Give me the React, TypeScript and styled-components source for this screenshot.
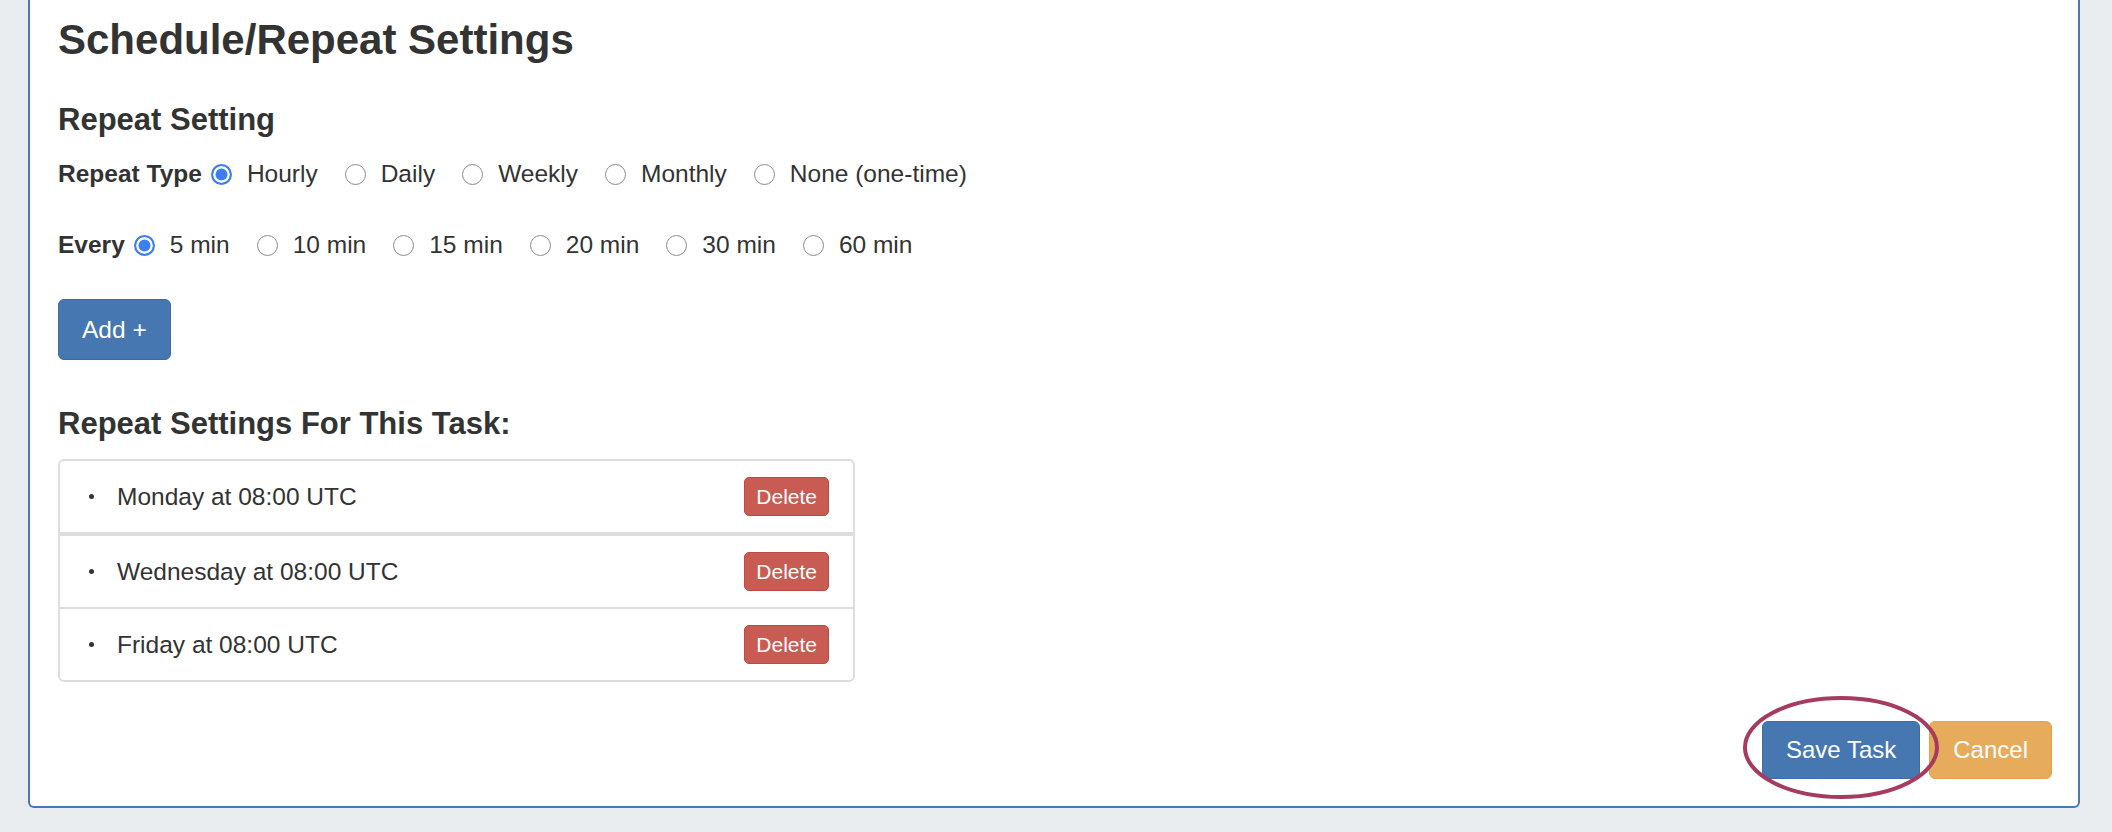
import React from "react";
import styled, { createGlobalStyle } from "styled-components";

const GlobalStyle = createGlobalStyle`
  html, body { margin: 0; padding: 0; background: #e9edf0; }
  body {
    font-family: "Liberation Sans", Arial, Helvetica, sans-serif;
    color: #333;
  }
  * { box-sizing: border-box; }
`;

const Page = styled.div`
  min-height: 832px;
  padding: 0 32px 24px 28px;
  background: #e9edf0;
`;

const Panel = styled.section`
  background: #fff;
  border: 2px solid #4a78b2;
  border-top: none;
  border-radius: 0 0 6px 6px;
  padding: 0 26px 27px 28px;
  display: flex;
  flex-direction: column;
  align-items: flex-start;
`;

const Title = styled.h1`
  margin: 19px 0 0;
  font-size: 42px;
  line-height: 42px;
  font-weight: 700;
  color: #333;
`;

const SectionTitle = styled.h2<{ $gap: number }>`
  margin: ${(p) => p.$gap}px 0 0;
  font-size: 31px;
  line-height: 31px;
  font-weight: 700;
  color: #333;
`;

const OptionRow = styled.div<{ $gap: number }>`
  display: flex;
  align-items: center;
  height: 28px;
  margin-top: ${(p) => p.$gap}px;
  font-size: 24.5px;
  line-height: 28px;
  color: #333;
`;

const RowLabel = styled.span`
  font-weight: 700;
  margin-right: 9px;
`;

const Option = styled.label`
  display: inline-flex;
  align-items: center;
  margin-right: 27px;
  &:last-child { margin-right: 0; }
`;

const Radio = styled.span<{ $checked?: boolean }>`
  flex: none;
  width: 21px;
  height: 21px;
  margin-right: 15px;
  border-radius: 50%;
  ${(p) =>
    p.$checked
      ? `border: 2px solid #3b7ff2; background: #3b7ff2; box-shadow: inset 0 0 0 2.5px #fff;`
      : `border: 1.5px solid #8a8a8a; background: #fff;`}
`;

const AddButton = styled.button`
  margin-top: 40px;
  height: 61px;
  padding: 0 23px;
  font-family: inherit;
  font-size: 24.5px;
  color: #fff;
  background: #4677b0;
  border: 1px solid #3e6ca4;
  border-radius: 6px;
`;

const List = styled.ul`
  margin: 20px 0 0;
  padding: 0;
  list-style: none;
  width: 797px;
  border: 2px solid #dddddd;
  border-radius: 6px;
`;

const ListItem = styled.li<{ $sep: number }>`
  display: flex;
  align-items: center;
  height: ${(p) => 71 + p.$sep}px;
  padding: 0 24px 0 29px;
  border-bottom: ${(p) => p.$sep}px solid #dddddd;
  font-size: 24.5px;
  color: #333;
`;

const Bullet = styled.span`
  flex: none;
  width: 5px;
  height: 5px;
  border-radius: 50%;
  background: #333;
  margin-right: 23px;
`;

const ItemText = styled.span`
  flex: 1;
`;

const DeleteButton = styled.button`
  height: 39px;
  padding: 0 11px;
  font-family: inherit;
  font-size: 21px;
  color: #fff;
  background: #c85c53;
  border: 1px solid #bc4a42;
  border-radius: 5px;
`;

const Footer = styled.div`
  align-self: stretch;
  display: flex;
  justify-content: flex-end;
  gap: 9px;
  margin-top: 39px;
`;

const ActionButton = styled.button<{ $variant: "primary" | "warning" }>`
  height: 58px;
  padding: 0 23px;
  font-family: inherit;
  font-size: 24px;
  color: #fff;
  border-radius: 6px;
  background: ${(p) => (p.$variant === "primary" ? "#4677b0" : "#e6ac5b")};
  border: 1px solid ${(p) => (p.$variant === "primary" ? "#3e6ca4" : "#e2a24e")};
`;

const Highlight = styled.span`
  position: relative;
  display: inline-flex;
`;

const Annotation = styled.svg`
  position: absolute;
  left: -19px;
  top: -25px;
  width: 196px;
  height: 103px;
  overflow: visible;
  pointer-events: none;
  z-index: 2;
`;

const typeOptions = ["Hourly", "Daily", "Weekly", "Monthly", "None (one-time)"];
const everyOptions = ["5 min", "10 min", "15 min", "20 min", "30 min", "60 min"];
const entries = [
  { text: "Monday at 08:00 UTC", sep: 4 },
  { text: "Wednesday at 08:00 UTC", sep: 2 },
  { text: "Friday at 08:00 UTC", sep: 0 },
];

export default function App() {
  return (
    <>
      <GlobalStyle />
      <Page>
        <Panel>
          <Title>Schedule/Repeat Settings</Title>
          <SectionTitle $gap={43}>Repeat Setting</SectionTitle>
          <OptionRow $gap={25}>
            <RowLabel>Repeat Type</RowLabel>
            {typeOptions.map((o, i) => (
              <Option key={o}>
                <Radio $checked={i === 0} />
                {o}
              </Option>
            ))}
          </OptionRow>
          <OptionRow $gap={43}>
            <RowLabel>Every</RowLabel>
            {everyOptions.map((o, i) => (
              <Option key={o}>
                <Radio $checked={i === 0} />
                {o}
              </Option>
            ))}
          </OptionRow>
          <AddButton>Add +</AddButton>
          <SectionTitle $gap={48}>Repeat Settings For This Task:</SectionTitle>
          <List>
            {entries.map((e) => (
              <ListItem key={e.text} $sep={e.sep}>
                <Bullet />
                <ItemText>{e.text}</ItemText>
                <DeleteButton>Delete</DeleteButton>
              </ListItem>
            ))}
          </List>
          <Footer>
            <Highlight>
              <ActionButton $variant="primary">Save Task</ActionButton>
              <Annotation viewBox="0 0 196 103">
                <ellipse
                  cx="98"
                  cy="51.5"
                  rx="96"
                  ry="49.5"
                  fill="none"
                  stroke="#a63a5f"
                  strokeWidth="4"
                />
              </Annotation>
            </Highlight>
            <ActionButton $variant="warning">Cancel</ActionButton>
          </Footer>
        </Panel>
      </Page>
    </>
  );
}
